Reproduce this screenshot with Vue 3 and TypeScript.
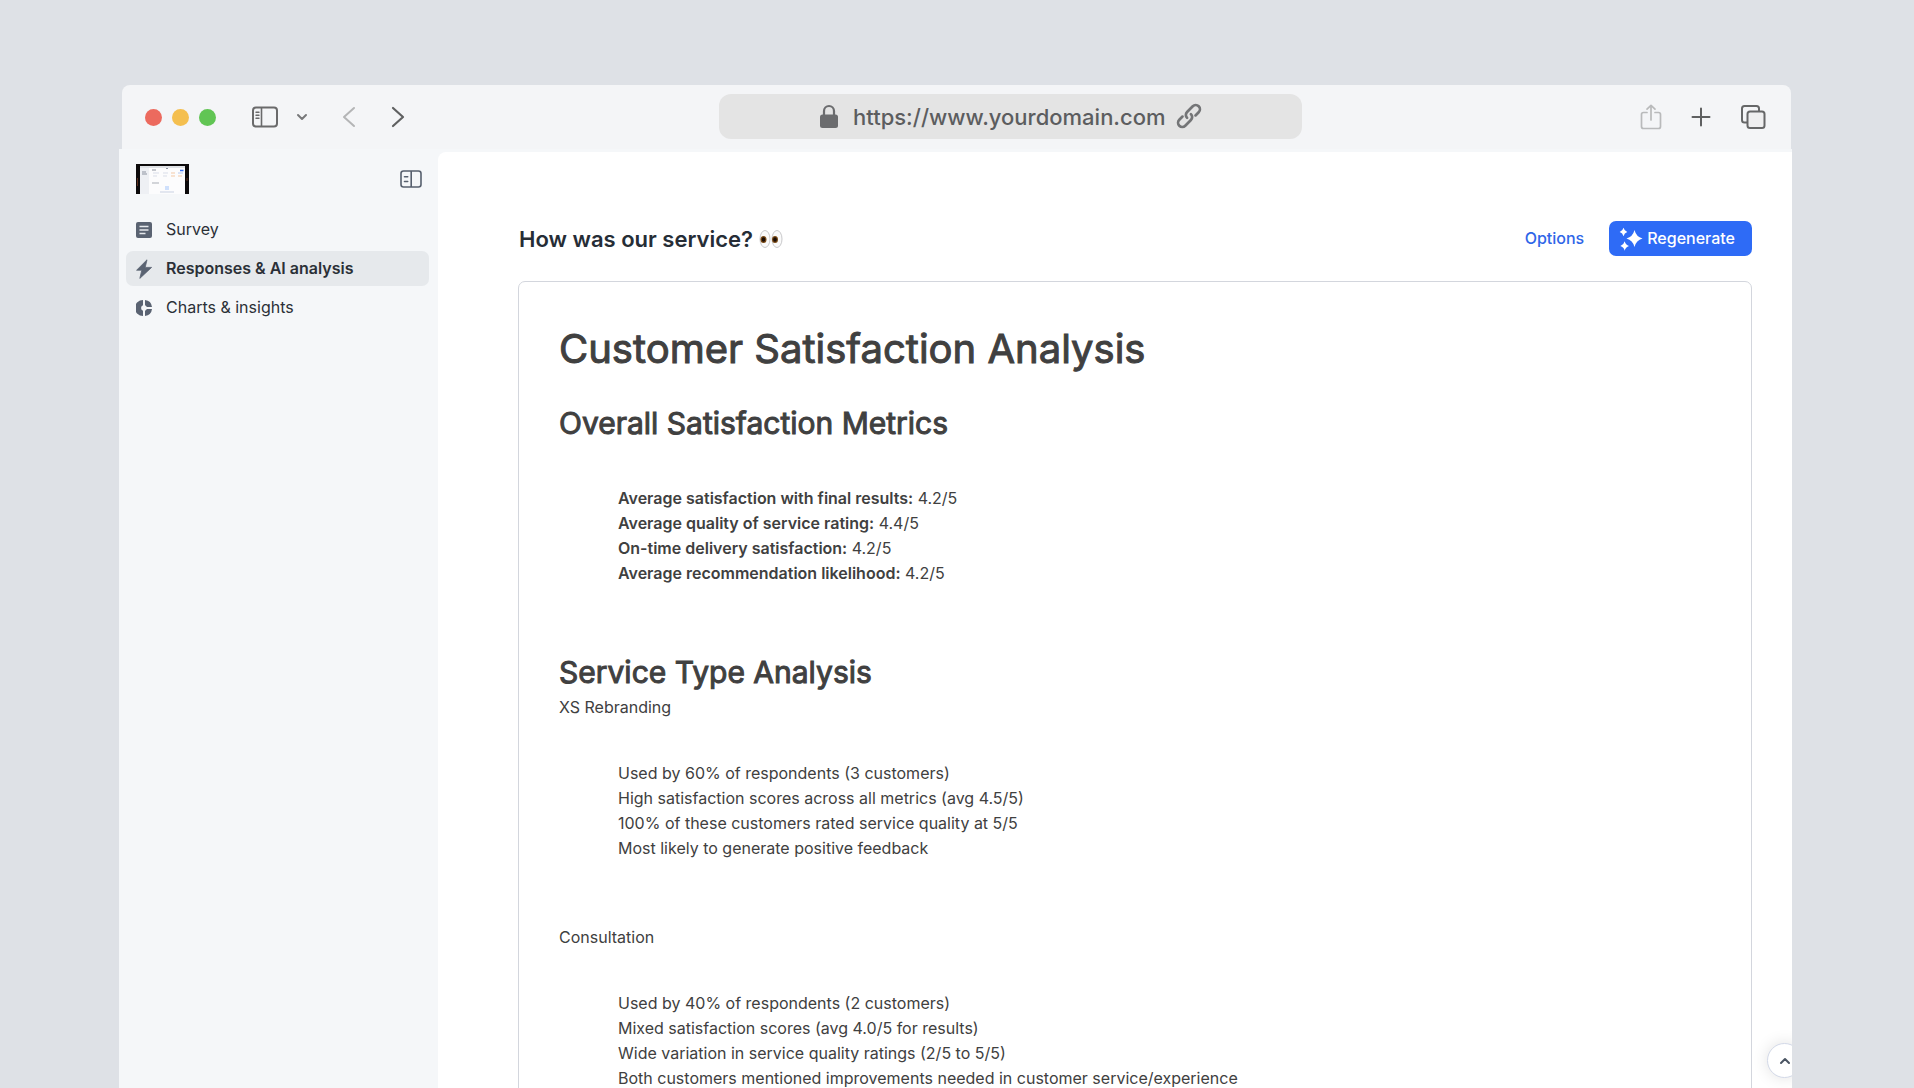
<script setup lang="ts">
import { ref } from 'vue'

interface NavItem {
  id: string
  label: string
}

interface Metric {
  label: string
  value: string
}

interface ServiceType {
  name: string
  notes: string[]
}

const active = ref('responses')
const address = ref('https://www.yourdomain.com')

const navItems: NavItem[] = [
  { id: 'survey', label: 'Survey' },
  { id: 'responses', label: 'Responses & AI analysis' },
  { id: 'charts', label: 'Charts & insights' },
]

const metrics: Metric[] = [
  { label: 'Average satisfaction with final results:', value: '4.2/5' },
  { label: 'Average quality of service rating:', value: '4.4/5' },
  { label: 'On-time delivery satisfaction:', value: '4.2/5' },
  { label: 'Average recommendation likelihood:', value: '4.2/5' },
]

const services: ServiceType[] = [
  {
    name: 'XS Rebranding',
    notes: [
      'Used by 60% of respondents (3 customers)',
      'High satisfaction scores across all metrics (avg 4.5/5)',
      '100% of these customers rated service quality at 5/5',
      'Most likely to generate positive feedback',
    ],
  },
  {
    name: 'Consultation',
    notes: [
      'Used by 40% of respondents (2 customers)',
      'Mixed satisfaction scores (avg 4.0/5 for results)',
      'Wide variation in service quality ratings (2/5 to 5/5)',
      'Both customers mentioned improvements needed in customer service/experience',
    ],
  },
]
</script>

<template>
  <div class="desktop">
    <div class="window">
      <header class="toolbar">
        <div class="tools-left">
          <div class="lights">
            <span class="light red"></span>
            <span class="light yellow"></span>
            <span class="light green"></span>
          </div>
          <button class="tool panel" type="button" aria-label="Show sidebar">
            <svg width="28" height="22" viewBox="0 0 28 22" fill="none" stroke="#6a6a6b" stroke-width="2">
              <rect x="2" y="1.5" width="24" height="19" rx="3" />
              <path d="M10.5 1.5v19" stroke-width="1.6" />
              <path d="M5 6.2h3M5 9.2h3M5 12.2h3" stroke-width="1.4" stroke-linecap="round" />
            </svg>
          </button>
          <button class="tool caret" type="button" aria-label="Tab groups">
            <svg width="12" height="8" viewBox="0 0 12 8" fill="none" stroke="#77787a" stroke-width="2" stroke-linecap="round" stroke-linejoin="round">
              <path d="M2 2l4 4 4-4" />
            </svg>
          </button>
          <button class="tool back" type="button" aria-label="Back">
            <svg width="14" height="22" viewBox="0 0 14 22" fill="none" stroke="#b4b5b6" stroke-width="2" stroke-linecap="round" stroke-linejoin="round">
              <path d="M12 2L2 11l10 9" />
            </svg>
          </button>
          <button class="tool forward" type="button" aria-label="Forward">
            <svg width="14" height="22" viewBox="0 0 14 22" fill="none" stroke="#5f6061" stroke-width="2.2" stroke-linecap="round" stroke-linejoin="round">
              <path d="M2 2l10 9-10 9" />
            </svg>
          </button>
        </div>

        <label class="address">
          <svg width="20" height="25" viewBox="0 0 20 25" aria-hidden="true">
            <rect x="1" y="10.500" width="18" height="13.500" rx="2.500" fill="#6b6c6e" />
            <path d="M5 11.500V7a5 5 0 0 1 10 0v4.500" fill="none" stroke="#6b6c6e" stroke-width="2.200" />
          </svg>
          <input v-model="address" type="text" aria-label="Address" />
          <svg width="26" height="26" viewBox="-13 -13 26 26" fill="none" stroke="#747577" stroke-width="2.700" stroke-linecap="round" aria-hidden="true">
            <g transform="rotate(-45)">
              <path d="M-5-4.200H-9.500a4.200 4.200 0 0 0 0 8.400H-1.500a4.200 4.200 0 0 0 4.200-4.200" />
              <path d="M5 4.200H9.500a4.200 4.200 0 0 0 0-8.400H1.500a4.200 4.200 0 0 0-4.200 4.200" />
            </g>
          </svg>
        </label>

        <div class="tools-right">
          <button class="tool" type="button" aria-label="Share">
            <svg width="22" height="26" viewBox="0 0 22 26" fill="none" stroke="#b9babb" stroke-width="1.7" stroke-linecap="round" stroke-linejoin="round">
              <path d="M7 8.5H3.5a2 2 0 0 0-2 2v12a2 2 0 0 0 2 2h15a2 2 0 0 0 2-2v-12a2 2 0 0 0-2-2H15" />
              <path d="M11 16V1.5M7 5.2l4-3.900 4 3.900" />
            </svg>
          </button>
          <button class="tool" type="button" aria-label="New tab">
            <svg width="20" height="20" viewBox="0 0 20 20" fill="none" stroke="#5f6061" stroke-width="2" stroke-linecap="round">
              <path d="M10 1.5v17M1.5 10h17" />
            </svg>
          </button>
          <button class="tool" type="button" aria-label="Tab overview">
            <svg width="26" height="26" viewBox="0 0 26 26" fill="none" stroke="#666768" stroke-width="2">
              <path d="M7 18.5H4.5A2.5 2.5 0 0 1 2 16V4.5A2.5 2.5 0 0 1 4.5 2h12A2.5 2.5 0 0 1 19 4.5V7" />
              <rect x="7.5" y="7.5" width="17" height="16.5" rx="2.5" fill="#efeff0" />
            </svg>
          </button>
        </div>
      </header>

      <div class="body">
        <aside class="sidebar">
          <div class="brand">
            <svg width="53" height="30" viewBox="0 0 53 30" role="img" aria-label="Workspace">
              <rect width="53" height="30" fill="#0c0a0b" />
              <rect x="4" y="2" width="45" height="28" fill="#fcfcfd" />
              <rect x="4" y="2" width="45" height="2" fill="#dfe2e6" />
              <rect x="4" y="4" width="9" height="26" fill="#eef0f4" />
              <path d="M6 8h4M6 10h5M16 6h4M30 4.5h2" stroke="#8d93a0" />
              <path d="M17 9h6M27 9h5M17 12h4M27 12h4" stroke="#d9dde8" />
              <path d="M44 6.5h3.5" stroke="#3b74f5" stroke-width="1.5" />
              <path d="M35 9h4M35 12h4M42 12h4" stroke="#f3c9a6" />
              <path d="M42 9h5" stroke="#b7c9ee" />
              <path d="M16 19h7" stroke="#a9adb5" />
              <rect x="29" y="22" width="4" height="4" fill="#cfe0fc" />
              <path d="M24 28h14" stroke="#c9d1e2" />
              <path d="M1.5 14v8M51 14v3" stroke="#5a2d1c" />
            </svg>
            <button class="tool" type="button" aria-label="Collapse sidebar">
              <svg width="22" height="18" viewBox="0 0 22 18" fill="none" stroke="#57606e" stroke-width="1.6">
                <rect x="1" y="1" width="20" height="16" rx="2.5" />
                <path d="M11.2 1v16" />
                <path d="M4.5 6.8h3.2M4.5 11.5h3.2" stroke-linecap="round" />
              </svg>
            </button>
          </div>
          <nav class="nav">
            <a
              v-for="item in navItems"
              :key="item.id"
              href="#"
              class="nav-item"
              :class="{ active: active === item.id }"
              @click.prevent="active = item.id"
            >
              <svg v-if="item.id === 'survey'" width="16" height="16" viewBox="0 0 16 16" aria-hidden="true">
                <rect width="16" height="16" rx="2" fill="#5a6372" />
                <path d="M3.5 4.5h9M3.5 8h9M3.5 11.5h6" stroke="#e6e9ed" stroke-width="1.3" />
              </svg>
              <svg v-else-if="item.id === 'responses'" width="16" height="20" viewBox="0 0 16 20" aria-hidden="true">
                <path d="M11 .8L.6 11.2h5.2L3.8 19.4 15.6 8.4H9.2z" fill="#5a6372" stroke="#5a6372" stroke-width=".8" stroke-linejoin="round" />
              </svg>
              <svg v-else width="16" height="16" viewBox="0 0 16 16" aria-hidden="true">
                <path d="M7 0v5.2a3 3 0 0 0 0 5.600V16A8 8 0 0 1 7 0z" fill="#5a6372" />
                <path d="M9 0a8 8 0 0 1 7 7h-5.200A3 3 0 0 0 9 5.200z" fill="#5a6372" />
                <path d="M9 16a8 8 0 0 0 7-7h-5.200A3 3 0 0 1 9 10.800z" fill="#5a6372" />
              </svg>
              <span>{{ item.label }}</span>
            </a>
          </nav>
        </aside>

        <main class="content">
          <div class="heading">
            <h1 class="title">
              How was our service?
              <svg width="24" height="18" viewBox="0 0 24 18" role="img" aria-label="Eyes">
                <ellipse cx="6" cy="9" rx="5" ry="8.5" fill="#fafafa" stroke="#c9c9cb" />
                <ellipse cx="18" cy="9" rx="5" ry="8.5" fill="#fafafa" stroke="#c9c9cb" />
                <ellipse cx="4.5" cy="9.5" rx="3" ry="3.5" fill="#7a4a16" />
                <ellipse cx="16" cy="9.5" rx="3" ry="3.5" fill="#7a4a16" />
                <ellipse cx="4.5" cy="9.5" rx="1.8" ry="2.2" fill="#1a0d05" />
                <ellipse cx="16" cy="9.5" rx="1.8" ry="2.2" fill="#1a0d05" />
              </svg>
            </h1>
            <button class="options" type="button">Options</button>
            <button class="regenerate" type="button">
              <svg width="24" height="24" viewBox="0 0 24 24" fill="#fff" aria-hidden="true">
                <path d="M15.5 3q1.7 6.8 8 8.5-6.3 1.7-8 8.5-1.7-6.8-8-8.5 6.3-1.7 8-8.5z" />
                <path d="M4.5.8Q5.3 4 8.3 5 5.3 6 4.5 9.2 3.7 6 .7 5 3.7 4 4.5.8z" />
                <path d="M5.7 14.3q.9 3.6 4.3 4.700-3.400 1.100-4.300 4.700Q4.800 20.100 1.400 19q3.400-1.100 4.300-4.700z" />
              </svg>
              Regenerate
            </button>
          </div>

          <article class="report">
            <h2 class="report-title">Customer Satisfaction Analysis</h2>

            <section class="overall">
              <h3 class="section-title">Overall Satisfaction Metrics</h3>
              <ul class="list metrics">
                <li v-for="metric in metrics" :key="metric.label">
                  <strong>{{ metric.label }}</strong> {{ metric.value }}
                </li>
              </ul>
            </section>

            <section class="services">
              <h3 class="section-title">Service Type Analysis</h3>
              <div v-for="service in services" :key="service.name" class="service">
                <p>{{ service.name }}</p>
                <ul class="list">
                  <li v-for="note in service.notes" :key="note">{{ note }}</li>
                </ul>
              </div>
            </section>
          </article>
        </main>
      </div>

      <button class="to-top" type="button" aria-label="Back to top">
        <svg width="12" height="8" viewBox="0 0 12 8" fill="none" stroke="#4b5563" stroke-width="2" stroke-linecap="round" stroke-linejoin="round">
          <path d="M2 6l4-4 4 4" />
        </svg>
      </button>
    </div>
  </div>
</template>

<style>
body {
  margin: 0;
  background: #dee1e6;
}
</style>

<style scoped>
.desktop {
  box-sizing: border-box;
  height: 100vh;
  padding: 85px 122px 0 119px;
  overflow: hidden;
  background: #dee1e6;
  font-family: Inter, "Liberation Sans", sans-serif;
  font-size: 16px;
  line-height: 25px;
  color: #404040;
}

.window {
  position: relative;
  display: flex;
  flex-direction: column;
  height: 100%;
  overflow: hidden;
}

button {
  padding: 0;
  border: 0;
  background: none;
  font: inherit;
  cursor: pointer;
}

svg {
  display: block;
  flex: none;
}

.tool {
  display: flex;
}

.toolbar {
  display: grid;
  grid-template-columns: 1.22fr 1.19fr 1fr;
  align-items: center;
  flex: none;
  height: 64px;
  margin: 0 1px 0 3px;
  border-radius: 8px 8px 0 0;
  background: #f4f5f7;
}

.tools-left {
  display: flex;
  align-items: center;
  padding-left: 23px;
}

.lights {
  display: flex;
  gap: 10px;
}

.light {
  width: 17px;
  height: 17px;
  border-radius: 50%;
}

.red {
  background: #ec6a5e;
}

.yellow {
  background: #f4bf4f;
}

.green {
  background: #61c554;
}

.panel {
  margin-left: 35px;
}

.caret {
  margin-left: 17px;
}

.back {
  margin-left: 34px;
}

.forward {
  margin-left: 35px;
}

.address {
  display: flex;
  align-items: center;
  justify-content: center;
  gap: 10px;
  height: 45px;
  margin-bottom: 2px;
  border-radius: 12px;
  background: #e4e4e4;
}

.address input {
  box-sizing: border-box;
  field-sizing: content;
  padding: 2px 0 0 4px;
  border: 0;
  outline: 0;
  background: none;
  color: #5c5d5f;
  font-family: Inter, sans-serif;
  font-size: 22px;
  font-weight: 500;
  line-height: 30px;
}

.tools-right {
  display: flex;
  align-items: center;
  justify-content: flex-end;
  gap: 29px;
  padding-right: 25px;
}

.body {
  display: flex;
  flex: 1;
  min-height: 0;
  background: #f5f7f9;
}

.sidebar {
  box-sizing: border-box;
  flex: none;
  width: 319px;
  padding: 15px 9px 0 7px;
}

.brand {
  display: flex;
  align-items: center;
  justify-content: space-between;
  height: 30px;
  padding: 0 7px 0 10px;
}

.nav {
  display: flex;
  flex-direction: column;
  gap: 4px;
  margin-top: 18px;
}

.nav-item {
  display: flex;
  align-items: center;
  gap: 14px;
  height: 35px;
  padding-left: 10px;
  border-radius: 7px;
  color: #2b3037;
  text-decoration: none;
}

.nav-item.active {
  background: #e6e9ec;
  font-weight: 600;
}

.content {
  flex: 1;
  min-width: 0;
  margin-top: 3px;
  padding: 69px 40px 0 80px;
  border-top-left-radius: 8px;
  background: #fff;
}

.heading {
  display: flex;
  align-items: center;
  height: 35px;
}

.title,
.report-title,
.section-title {
  margin: 0;
}

.title {
  display: flex;
  align-items: center;
  gap: 6px;
  flex: 1;
  padding-left: 1px;
  color: #262d36;
  font-size: 22px;
  font-weight: 600;
  line-height: 30px;
}

.options {
  margin-right: 25px;
  color: #2f66e8;
  font-weight: 500;
}

.regenerate {
  display: flex;
  align-items: center;
  gap: 4px;
  height: 35px;
  padding: 0 17px 0 10px;
  border-radius: 7px;
  background: #2e6bf6;
  color: #fff;
  font-weight: 500;
}

.report {
  margin-top: 25px;
  padding: 42px 40px 60px;
  border: 1px solid #d3d6dd;
  border-radius: 7px;
}

.report-title,
.section-title {
  font-weight: 400;
  -webkit-text-stroke: 1px currentColor;
}

.report-title {
  font-size: 40px;
  line-height: 50px;
}

.overall {
  margin-top: 30px;
}

.section-title {
  font-size: 30px;
  line-height: 38px;
}

.list {
  margin: 41px 0 0;
  padding: 0 0 0 59px;
  list-style: none;
}

.list.metrics {
  margin-top: 44px;
}

.list strong {
  font-weight: 600;
}

.services {
  margin-top: 67px;
}

.service {
  margin-bottom: 64px;
}

.service p {
  margin: 4px 0 0;
}

.service + .service p {
  margin-top: 0;
}

.to-top {
  position: absolute;
  right: -10px;
  bottom: 10px;
  display: flex;
  align-items: center;
  justify-content: center;
  width: 35px;
  height: 35px;
  border: 1px solid #d3d9e8;
  border-radius: 50%;
  background: #fff;
  box-shadow: 0 0 16px rgba(0, 0, 0, 0.12);
}
</style>
